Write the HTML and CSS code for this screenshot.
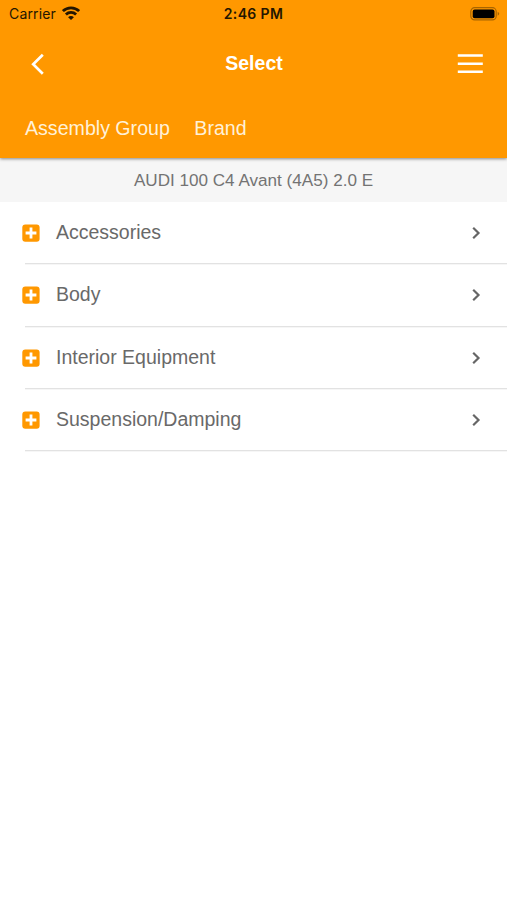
FILE: index.html
```html
<!DOCTYPE html>
<html lang="en">
<head>
<meta charset="utf-8">
<title>Select</title>
<link rel="stylesheet" href="styles.css">
</head>
<body>
<header class="header">
  <div class="status">
    <div class="carrier"><span>Carrier</span>
      <svg class="wifi" width="18" height="14" viewBox="0 0 18 14" fill="none" stroke="#241600" stroke-width="2.8"><path d="M.9 5.1a11.6 11.6 0 0 1 16.2 0M3.9 8.5a7.3 7.3 0 0 1 10.2 0"/><path d="M9 14 6.1 11.2a4 4 0 0 1 5.8 0z" fill="#241600" stroke="none"/></svg>
    </div>
    <div class="time">2:46 PM</div>
    <svg class="battery" width="30" height="14" viewBox="0 0 30 14"><rect x=".8" y=".7" width="25.4" height="12.2" rx="3.8" fill="none" stroke="#a86500" stroke-width="1.2"/><rect x="2.7" y="2.5" width="21.8" height="8.7" rx="2" fill="#000"/><path d="M27.7 4.8q3 2 0 4z" fill="#a86500"/></svg>
  </div>
  <nav class="bar">
    <svg class="back" width="16" height="24" viewBox="0 0 16 24" fill="none" stroke="#fff" stroke-width="2.7"><path d="M13.8 2.7 4.2 12.2l9.6 9.5"/></svg>
    <h1 class="title">Select</h1>
    <svg class="menu" width="26" height="22" viewBox="0 0 26 22" fill="#fff"><path d="M.8 1.2h25v2.5h-25zM.8 9.4h25v2.5h-25zM.8 17.5h25V20h-25z"/></svg>
  </nav>
  <div class="tabs"><span>Assembly Group</span><span>Brand</span></div>
</header>
<main>
  <div class="vehicle">AUDI 100 C4 Avant (4A5) 2.0 E</div>
  <ul class="list">
    <li class="row"><svg class="plus" width="18" height="18" viewBox="0 0 18 18"><rect x=".3" y=".4" width="17.3" height="17.3" rx="3" fill="#ff9800"/><path d="M9 3.6v10.8M3.6 9h10.8" stroke="#fff" stroke-width="2.8"/></svg><span class="label">Accessories</span><svg class="chevron" width="10" height="14" viewBox="0 0 10 14" fill="none" stroke="#666" stroke-width="2.2"><path d="m2.2 1.8 5.3 5.2-5.3 5.2"/></svg></li>
    <li class="row"><svg class="plus" width="18" height="18" viewBox="0 0 18 18"><rect x=".3" y=".4" width="17.3" height="17.3" rx="3" fill="#ff9800"/><path d="M9 3.6v10.8M3.6 9h10.8" stroke="#fff" stroke-width="2.8"/></svg><span class="label">Body</span><svg class="chevron" width="10" height="14" viewBox="0 0 10 14" fill="none" stroke="#666" stroke-width="2.2"><path d="m2.2 1.8 5.3 5.2-5.3 5.2"/></svg></li>
    <li class="row"><svg class="plus" width="18" height="18" viewBox="0 0 18 18"><rect x=".3" y=".4" width="17.3" height="17.3" rx="3" fill="#ff9800"/><path d="M9 3.6v10.8M3.6 9h10.8" stroke="#fff" stroke-width="2.8"/></svg><span class="label">Interior Equipment</span><svg class="chevron" width="10" height="14" viewBox="0 0 10 14" fill="none" stroke="#666" stroke-width="2.2"><path d="m2.2 1.8 5.3 5.2-5.3 5.2"/></svg></li>
    <li class="row"><svg class="plus" width="18" height="18" viewBox="0 0 18 18"><rect x=".3" y=".4" width="17.3" height="17.3" rx="3" fill="#ff9800"/><path d="M9 3.6v10.8M3.6 9h10.8" stroke="#fff" stroke-width="2.8"/></svg><span class="label">Suspension/Damping</span><svg class="chevron" width="10" height="14" viewBox="0 0 10 14" fill="none" stroke="#666" stroke-width="2.2"><path d="m2.2 1.8 5.3 5.2-5.3 5.2"/></svg></li>
  </ul>
</main>
</body>
</html>
```
FILE: styles.css
```css
* { box-sizing: border-box; }
body {
  margin: 0;
  min-height: 900px;
  background: #fff;
  font-family: "Liberation Sans", Arial, sans-serif;
}
svg { display: block; flex: none; }
.header {
  position: relative;
  height: 158px;
  background: #ff9800;
  box-shadow: 0 1px 3px rgba(0, 0, 0, .45);
}
.status {
  display: grid;
  grid-template-columns: 1fr auto 1fr;
  align-items: center;
  height: 27px;
  padding: 0 7px 0 9px;
  font-family: Inter, sans-serif;
  font-size: 14px;
  line-height: 27px;
  color: #241600;
}
.carrier { display: flex; align-items: center; gap: 6px; letter-spacing: .15px; }
.wifi { margin-top: -2px; }
.time { margin-left: -2px; font-weight: 600; letter-spacing: .35px; }
.battery { justify-self: end; }
.bar {
  display: grid;
  grid-template-columns: 1fr auto 1fr;
  align-items: center;
  height: 73px;
  padding: 0 24px 0 29px;
}
.back { margin-top: 1px; }
.title { margin: -2px 0 0 -4px; font-size: 19.5px; line-height: 24px; color: #fff; }
.menu { justify-self: end; margin-top: 1px; }
.tabs {
  display: flex;
  gap: 24.5px;
  height: 58px;
  padding-left: 25px;
  font-size: 19.6px;
  line-height: 57px;
  color: #fff1d8;
}
.vehicle {
  height: 44px;
  background: #f6f6f6;
  font-size: 17.1px;
  line-height: 45px;
  text-align: center;
  color: #737373;
}
.list { margin: 0; padding: 0; list-style: none; }
.row {
  display: flex;
  align-items: center;
  height: 62.3px;
  margin-left: 25px;
  padding: 1px 26px 0 0;
  border-bottom: 1px solid #e2e2e2;
  box-shadow: 0 1px 0 #f6f6f6;
}
.plus { margin-left: -3px; }
.label { flex: 1; margin: -2px 0 0 16px; font-size: 19.5px; line-height: 26px; color: #696969; }
```
